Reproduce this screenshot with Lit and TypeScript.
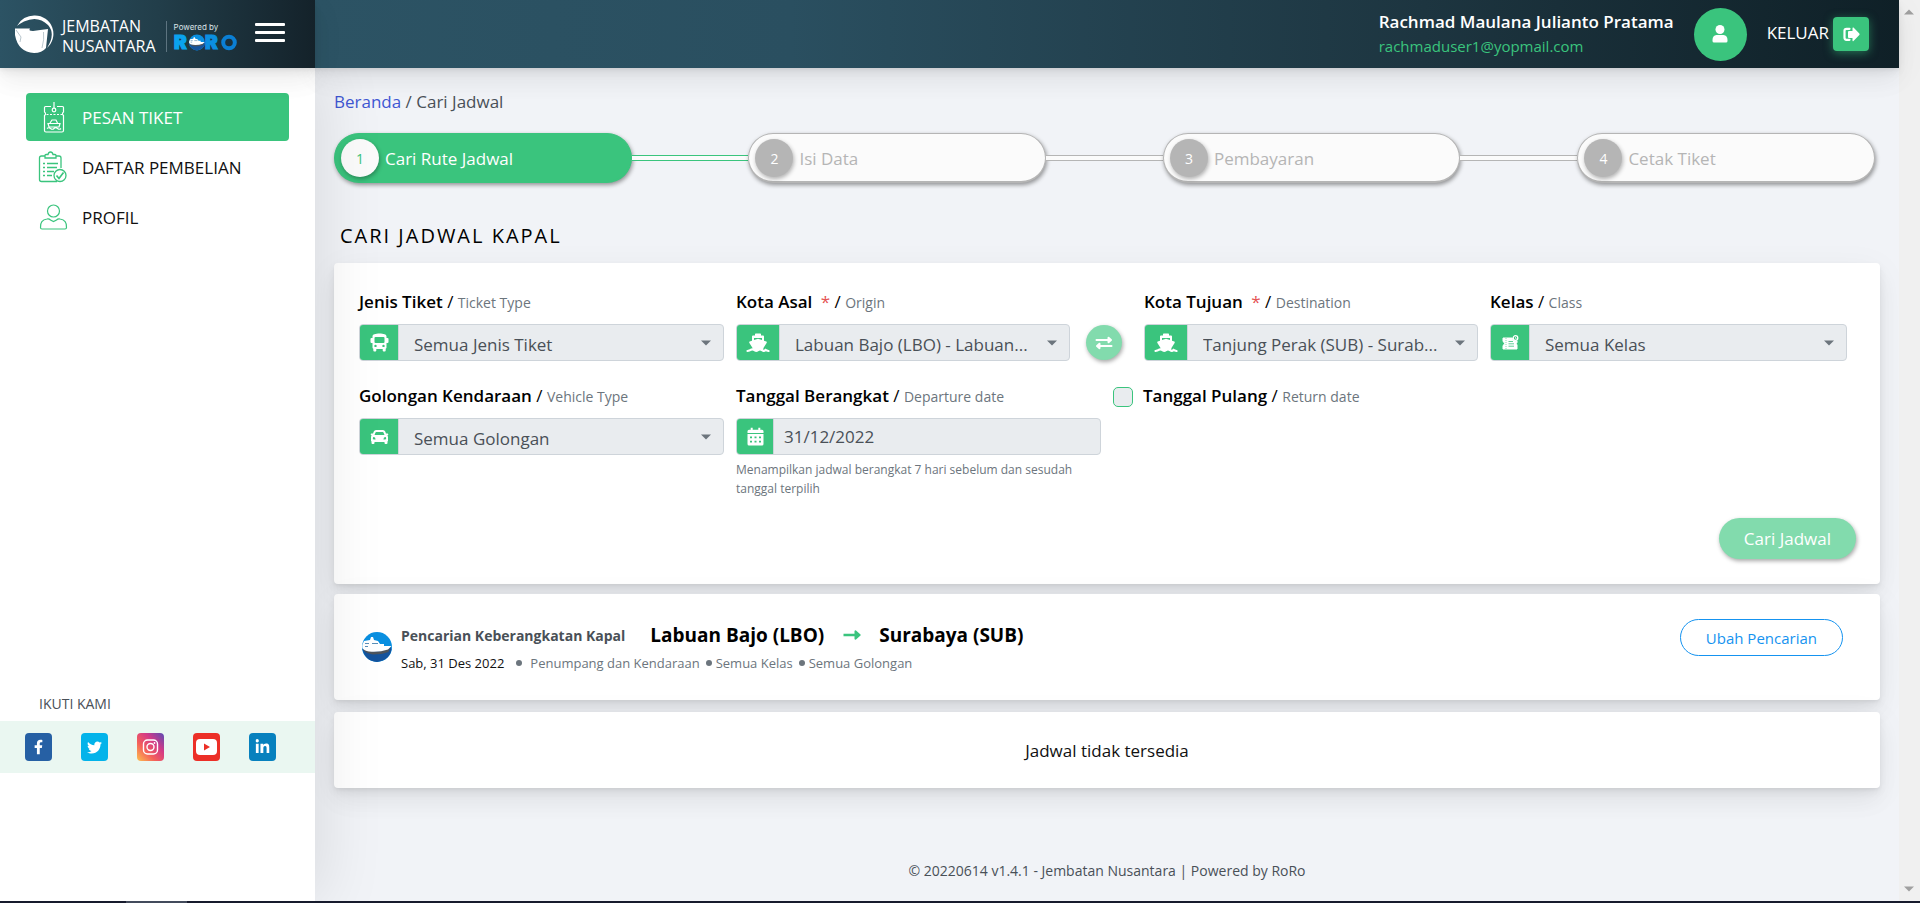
import { LitElement, html, svg, css, TemplateResult } from "lit";
import { customElement, property } from "lit/decorators.js";
import { classMap } from "lit/directives/class-map.js";

const icons: Record<string, TemplateResult> = {
  bus: html`<svg viewBox="0 0 19 19" width="19" height="19" fill="currentColor" aria-hidden="true">
    <path fill-rule="evenodd" d="M9.500 0.500C13.500 0.500 16.500 1.400 16.500 3.300V5H17.500Q18.500 5 18.500 6V9Q18.500 10 17.500 10H16.500V14.500Q16.500 15.500 15.700 15.700V17.500Q15.700 18.500 14.700 18.500H13.700Q12.700 18.500 12.700 17.500V16H6.300V17.500Q6.300 18.500 5.300 18.500H4.300Q3.300 18.500 3.300 17.500V15.700Q2.500 15.500 2.500 14.500V10H1.500Q0.500 10 0.500 9V6Q0.500 5 1.500 5H2.500V3.300C2.500 1.400 5.500 0.500 9.500 0.500ZM5.500 4Q4.500 4 4.500 5V9Q4.500 10 5.500 10H13.500Q14.500 10 14.500 9V5Q14.500 4 13.500 4ZM5.500 11.700A1.200 1.200 0 1 0 5.500 14.100A1.200 1.200 0 1 0 5.500 11.700ZM13.500 11.700A1.200 1.200 0 1 0 13.500 14.100A1.200 1.200 0 1 0 13.500 11.700Z"/></svg>`,
  car: html`<svg viewBox="0 0 19 16" width="19" height="16" fill="currentColor" aria-hidden="true">
    <path fill-rule="evenodd" d="M6 1H13Q14.600 1 15.200 2.500L16 4.600H17.700Q18.600 4.800 18.200 5.700L17.400 6.500Q18 7.200 18 8.200V11.500Q18 12.200 17.500 12.600V14Q17.500 15 16.500 15H15.500Q14.500 15 14.500 14V13H4.500V14Q4.500 15 3.500 15H2.500Q1.500 15 1.500 14V12.600Q1 12.200 1 11.500V8.200Q1 7.200 1.600 6.500L0.800 5.700Q0.400 4.800 1.300 4.600H3L3.800 2.500Q4.400 1 6 1ZM6.300 3Q5.700 3 5.500 3.500L4.500 6H14.500L13.500 3.500Q13.300 3 12.700 3ZM4 8A1.200 1.200 0 1 0 4 10.400H5.600Q5.400 8.200 4 8ZM15 8Q13.600 8.200 13.400 10.400H15A1.200 1.200 0 1 0 15 8Z"/></svg>`,
  ship: html`<svg viewBox="0 0 24 20" width="24" height="20" fill="currentColor" aria-hidden="true">
    <path fill-rule="evenodd" d="M9 1.200Q9 0.500 9.700 0.500H14.300Q15 0.500 15 1.200V2.500H17Q18 2.500 18 3.500V7.700L20.300 8.500Q21.200 9 20.600 9.900L17.600 14.700L17 17H7L6.400 14.700L3.400 9.900Q2.800 9 3.700 8.500L6 7.700V3.500Q6 2.500 7 2.500H9ZM8 5V7L12 5.700L16 7V5Z"/>
    <path d="M1.500 18Q3.500 17.800 4.700 16.900Q6.300 15.600 8 17Q10 18.600 12 17.100Q14 15.500 16 17.100Q18 18.600 19.500 16.900Q20.800 17.800 22.500 18" fill="none" stroke="currentColor" stroke-width="2.200" stroke-linecap="round"/></svg>`,
  calendar: html`<svg viewBox="0 0 17 19" width="17" height="19" fill="currentColor" aria-hidden="true">
    <path d="M3.700 0.700H5.700V2.700H11.300V0.700H13.300V2.700H15Q16.500 2.700 16.500 4.200V6H0.500V4.200Q0.500 2.700 2 2.700H3.700Z"/>
    <path fill-rule="evenodd" d="M0.500 7H16.500V17Q16.500 18.500 15 18.500H2Q0.500 18.500 0.500 17ZM3 9.500V11.300H5V9.500ZM7.500 9.500V11.300H9.500V9.500ZM12 9.500V11.300H14V9.500ZM3 13.700V15.500H5V13.700ZM7.500 13.700V15.500H9.500V13.700ZM12 13.700V15.500H14V13.700Z"/></svg>`,
  ticket: html`<svg viewBox="0 0 17 15" width="17" height="15" fill="currentColor" aria-hidden="true">
    <path d="M1 3H10.500Q10.500 6 14 6.200L15 6V7.500Q13.500 8.500 15 10V14H1V10.500Q2.500 9.500 2.500 8.500Q2.500 7.500 1 6.500Z" stroke="currentColor" stroke-linejoin="round"/>
    <path d="M4 3V14" stroke="#3ac47d" stroke-width="0.600" stroke-dasharray="1 1"/>
    <path d="M6.500 6.500H11M6.500 8.800H12M6.500 11.200H12" stroke="#3ac47d" stroke-width="0.800"/>
    <circle cx="13.500" cy="3" r="2.300" fill="none" stroke="currentColor" stroke-width="1.300"/><path d="M13.500 2V3.500H14.500" fill="none" stroke="currentColor" stroke-width="0.700"/></svg>`,
};

@customElement("select-field")
export class SelectField extends LitElement {
  @property() label = "";
  @property() note = "";
  @property() icon = "bus";
  @property() value = "";
  @property({ type: Boolean }) required = false;
  @property({ type: Boolean }) wide = false;

  static styles = css`
    :host { display: block; min-width: 0; }
    .caption { display: block; line-height: 24px; margin-bottom: 9px; color: #000; font-size: 17px; white-space: nowrap; }
    .name { font-weight: 600; }
    .star { color: #e55353; margin-left: 4px; }
    .note { font-size: 14px; color: #6c757d; }
    .group { display: flex; height: 37px; box-sizing: border-box; border: 1px solid #ced4da; border-radius: 4px; overflow: hidden; background: #e9ecef; }
    .addon { flex: none; width: 38px; display: grid; place-items: center; background: #3ac47d; color: #fff; border-right: 1px solid #ced4da; }
    .addon.wide { width: 42px; }
    .control { flex: 1; min-width: 0; display: grid; align-items: center; }
    select { grid-area: 1 / 1; appearance: none; width: 100%; height: 35px; border: 0; margin: 0; padding: 4px 30px 0 15px; background: none; font: inherit; font-size: 17px; color: #495057; opacity: 1; text-overflow: ellipsis; }
    .caret { grid-area: 1 / 1; justify-self: end; margin-right: 12px; pointer-events: none; }
  `;

  render() {
    return html`
      <label class="caption" for="control"><span class="name">${this.label}</span>${this.required ? html` <span class="star">*</span>` : ""} / <span class="note">${this.note}</span></label>
      <div class="group">
        <span class=${classMap({ addon: true, wide: this.wide })}>${icons[this.icon]}</span>
        <span class="control">
          <select id="control" disabled><option>${this.value}</option></select>
          <svg class="caret" width="10" height="6" viewBox="0 0 10 6" aria-hidden="true"><path d="M0 0.500H10L5 5.500Z" fill="#6c757d"/></svg>
        </span>
      </div>`;
  }
}

const globe = svg`
  <circle cx="15" cy="15" r="15" fill="#0a8fe0"/>
  <path d="M0.500 17L28.500 15L29.500 17Q28 28 15 30Q3 29 0.500 17Z" fill="#15539c"/>
  <path d="M0.500 17Q8 20.500 20 19L28.500 14.500L26.500 20Q20 22.500 11 22.500Q4 21.500 0.500 17Z" fill="#4d545c"/>
  <path d="M0.300 13L2 9L5 8.500L8 8L9 5H11L12 8L16 9L18 12H22V14L29.500 14L26 17.500Q17 20.500 7 19.500Q2 18.500 0.300 16Z" fill="#fff"/>
  <path d="M3 11.500H7M10 11.500H16M3 14.500H6" stroke="#5b8fb8" stroke-width="1.200"/>`;

@customElement("app-root")
export class AppRoot extends LitElement {
  static styles = css`
    :host { display: block; font-family: "Open Sans", "Noto Sans", sans-serif; font-size: 17px; color: #495057; --green: #3ac47d; --card-shadow: 0 7px 35px rgba(4, 20, 24, 0.05), 0 15px 22px rgba(4, 20, 24, 0.04), 0 4px 8px rgba(4, 20, 24, 0.06), 0 2px 3px rgba(4, 20, 24, 0.04); }
    * { box-sizing: border-box; }
    a { text-decoration: none; color: inherit; }
    button { font: inherit; cursor: pointer; border: 0; padding: 0; }
    svg { display: block; }
    .page { min-height: 100vh; display: grid; grid-template-columns: 315px minmax(0, 1fr) 21px; grid-template-rows: 68px 1fr 2px; background: #f1f3f7; }

    .brand { z-index: 3; display: flex; align-items: center; padding-left: 15px; background: linear-gradient(to right, #2c5364, #223e4a 50%, #14222a); color: #fff; box-shadow: var(--card-shadow); }
    .brand-name { margin-left: 8px; padding-top: 4px; font-size: 16px; line-height: 20px; }
    .divider { width: 1px; height: 31px; margin: 4px 7px 0 10px; background: #5d7480; }
    .powered { display: flex; flex-direction: column; gap: 2px; width: 63px; padding-top: 4px; }
    .powered small { font-family: Inter, sans-serif; font-size: 8px; line-height: 10px; color: #dbe3e7; white-space: nowrap; }
    .powered svg { overflow: visible; }
    .burger { width: 30px; height: 19px; margin-left: 18px; margin-bottom: 4px; background: none; display: flex; flex-direction: column; justify-content: space-between; }
    .burger span { height: 3px; border-radius: 1px; background: #fff; }

    .topbar { z-index: 2; display: flex; justify-content: flex-end; align-items: center; padding-right: 30px; color: #fff; background: linear-gradient(to right, #2c5364, #2a4f60 30%, #1d3540 70%, #0f2027); box-shadow: var(--card-shadow); }
    .user { line-height: 25px; }
    .user strong { display: block; font-weight: 600; font-size: 17px; }
    .user span { display: block; color: var(--green); font-size: 15px; }
    .avatar { width: 53px; height: 53px; border-radius: 50%; background: var(--green); display: grid; place-items: center; margin: 0 20px; }
    .logout { display: flex; align-items: center; gap: 4px; background: none; color: #fff; }
    .logout .text { margin-bottom: 4px; }
    .logout .badge { width: 36px; height: 34px; border-radius: 4px; background: var(--green); display: grid; place-items: center; box-shadow: 0 2px 10px rgba(58, 196, 125, 0.5); }

    .sidebar { z-index: 1; display: flex; flex-direction: column; background: #fff; box-shadow: 7px 0 60px rgba(0, 0, 0, 0.1); }
    nav { display: flex; flex-direction: column; gap: 2px; padding: 25px 26px 0; }
    nav a { height: 48px; display: flex; align-items: center; gap: 14px; padding-left: 12px; border-radius: 4px; color: #111; }
    nav a.active { background: var(--green); color: #fff; }
    nav svg { width: 30px; height: 32px; color: var(--green); }
    nav a.active svg { color: #fff; }
    .follow { margin: auto 0 128px; }
    .follow p { margin: 0; padding: 0 0 6px 39px; font-size: 14px; line-height: 22px; }
    .social { display: flex; align-items: center; gap: 29px; height: 52px; padding-left: 25px; background: #eaf7f1; }
    .social a > svg { width: 27px; height: 28px; }

    main { display: flex; flex-direction: column; padding: 22px 19px 0; }
    .crumbs { line-height: 24px; }
    .crumbs a { color: #3f57d3; }
    .steps { list-style: none; display: flex; align-items: center; margin: 19px 5px 0 0; padding: 0; color: #b5b5b5; }
    .step { flex: 298 298 298px; height: 50px; display: flex; align-items: center; gap: 6px; padding: 1px 0 0 6px; border: 1px solid #b5b5b5; border-bottom-width: 2px; border-radius: 25px; background: #fbfbfb; box-shadow: 1px 2px 4px rgba(0, 0, 0, 0.4); }
    .num { width: 38px; height: 38px; border-radius: 50%; display: grid; place-items: center; background: #b5b5b5; color: #fff; font-size: 14px; box-shadow: 1px 2px 4px rgba(0, 0, 0, 0.3); }
    .step.on { background: var(--green); border-color: var(--green); color: #fff; }
    .step.on .num { background: #fbfbfb; color: var(--green); }
    .link { flex: 117 117 117px; height: 6px; border: 1px solid #b5b5b5; border-width: 1px 0; background: #fbfbfb; }
    .link.on { border-color: var(--green); }
    h1 { margin: 41px 0 15px 6px; font-size: 20px; line-height: 24px; font-weight: 400; letter-spacing: 2px; color: #000; }

    .card { background: #fff; border-radius: 4px; box-shadow: var(--card-shadow); }
    .search { padding: 27px 24px 25px 25px; display: flex; flex-direction: column; }
    .row { display: grid; column-gap: 12px; margin-right: 9px; align-items: start; }
    .row.first { grid-template-columns: 365fr 334fr 50px 334fr 357fr; margin-bottom: 23px; }
    .row.second { grid-template-columns: 365fr 365fr 734fr; }
    .swap { align-self: end; justify-self: center; width: 36px; height: 35px; margin: 0 6px 1px 0; border-radius: 50%; background: #82dbad; color: #fff; display: grid; place-items: center; box-shadow: 1px 2px 4px rgba(0, 0, 0, 0.35); }
    .caption { display: block; line-height: 24px; color: #000; white-space: nowrap; }
    .caption b { font-weight: 600; }
    .caption span { font-size: 14px; color: #6c757d; }
    .date { display: flex; height: 37px; margin-top: 9px; border: 1px solid #ced4da; border-radius: 4px; overflow: hidden; background: #e9ecef; }
    .date .addon { width: 37px; background: var(--green); color: #fff; display: grid; place-items: center; border-right: 1px solid #ced4da; }
    .date input { flex: 1; min-width: 0; border: 0; padding: 0 10px; background: none; font: inherit; color: #495057; }
    .help { margin: 5px 24px 0 0; font-size: 12px; line-height: 19px; color: #6c757d; }
    .return { display: flex; align-items: center; gap: 10px; }
    .return input { appearance: none; width: 20px; height: 20px; margin: 0; border: 1px solid var(--green); border-radius: 5px; background: #e9ecef; }
    .submit { align-self: flex-end; height: 41px; padding: 0 25px; margin-top: 20px; border-radius: 21px; background: #82dbad; color: #fff; box-shadow: 1px 2px 4px rgba(0, 0, 0, 0.35); }

    .result { display: flex; align-items: flex-start; margin-top: 10px; min-height: 106px; padding: 25px 37px 0 28px; }
    .result .logo { width: 30px; height: 30px; margin: 13px 9px 0 0; }
    .info { flex: 1; }
    .route { display: flex; align-items: center; height: 32px; color: #000; font-size: 19px; font-weight: 700; }
    .route .what { font-size: 14px; color: #495057; margin-right: 25px; }
    .route svg { margin: 0 18px 0 19px; }
    .facts { display: flex; align-items: center; height: 24px; font-size: 13px; color: #6c757d; }
    .facts .day { color: #111; margin-right: 12px; }
    .dot { width: 6px; height: 6px; border-radius: 50%; background: #6c757d; margin-right: 4px; }
    .dot.lead { margin-right: 8px; }
    .facts .fact { margin-right: 6px; }
    .change { height: 37px; padding: 0 25px; background: none; border: 1px solid #1593f0; border-radius: 19px; color: #1593f0; font-size: 15px; }
    .empty { margin-top: 12px; height: 76px; display: grid; place-items: center; color: #111; }
    footer { margin-top: auto; padding-bottom: 18px; line-height: 24px; text-align: center; font-size: 14px; }

    .scroll { grid-column: 3; grid-row: 1 / 3; display: flex; flex-direction: column; justify-content: space-between; align-items: center; padding: 9px 1px 9px 0; background: #f0f0f0; }
    .taskbar { grid-column: 1 / -1; background: #171b2d; padding-left: 126px; z-index: 4; }
    .taskbar div { width: 61px; height: 2px; background: #434b5c; }
  `;

  private steps = ["Cari Rute Jadwal", "Isi Data", "Pembayaran", "Cetak Tiket"];

  render() {
    return html`
      <div class="page">
        <header class="brand">
          <svg width="39" height="38" viewBox="0 0 39 38" aria-hidden="true">
            <path d="M2 11A19 18.500 0 0 1 20 0.500A18.500 18.500 0 0 1 32 33Q41 19 33 10Q23 0 9 6.500Q5 8.500 2 11Z" fill="#fff"/>
            <path d="M0 13.500H15Q13 16 18 16Q25 15 33 14L31 33Q27 38 19 38Q3 37 0 20Z" fill="#fff"/>
            <path d="M28.500 17Q29.500 24 27 33" stroke="#9fb0b9" stroke-width="0.700" fill="none"/>
            <path d="M1 15L6 22L5 27" stroke="#b9c6cd" stroke-width="1" fill="none"/>
          </svg>
          <div class="brand-name">JEMBATAN<br />NUSANTARA</div>
          <div class="divider"></div>
          <div class="powered">
            <small>Powered by</small>
            <svg width="63" height="17" viewBox="0 0 63 17" role="img" aria-label="RORO">
              <text x="0" y="15" font-family="Inter, sans-serif" font-weight="900" font-size="19" fill="#0aa3ee" stroke="#0aa3ee" stroke-width="1.200">R</text>
              <g transform="translate(15 0.500) scale(0.530)">${globe}</g>
              <text x="31" y="15" font-family="Inter, sans-serif" font-weight="900" font-size="19" fill="#0b8fe0" stroke="#0b8fe0" stroke-width="1.200">R</text>
              <circle cx="55" cy="8.500" r="5.800" fill="none" stroke="#0b7fd4" stroke-width="4"/>
            </svg>
          </div>
          <button class="burger" aria-label="Menu"><span></span><span></span><span></span></button>
        </header>

        <header class="topbar">
          <div class="user"><strong>Rachmad Maulana Julianto Pratama</strong><span>rachmaduser1@yopmail.com</span></div>
          <div class="avatar">
            <svg width="16" height="18" viewBox="0 0 16 18" fill="#fff" aria-hidden="true"><circle cx="8" cy="4.500" r="4.500"/><path d="M4.500 10H11.500Q15.500 10.500 15.500 15V16Q15.500 17.500 14 17.500H2Q0.500 17.500 0.500 16V15Q0.500 10.500 4.500 10Z"/></svg>
          </div>
          <button class="logout">
            <span class="text">KELUAR</span>
            <span class="badge"><svg width="17" height="15" viewBox="0 0 17 15" fill="#fff" aria-hidden="true"><path d="M9.500 1.200Q9.500 0 10.500 0.600L16.300 6.500Q17 7.300 16.300 8.100L10.500 14Q9.500 14.600 9.500 13.500V11H6Q5 11 5 10V5Q5 4 6 4H9.500Z"/><path d="M6.500 1.800H3.500Q1.500 1.800 1.500 3.800V10.800Q1.500 12.800 3.500 12.800H6.500" fill="none" stroke="#fff" stroke-width="2.200" stroke-linecap="round"/></svg></span>
          </button>
        </header>

        <aside class="sidebar">
          <nav>
            <a class="active" href="#pesan">
              <svg viewBox="0 0 30 32" fill="none" stroke="currentColor" stroke-width="1.200" aria-hidden="true">
                <path d="M13 5.500H7.500Q6.500 5.500 6.500 6.500V11Q8.500 12.500 6.500 14.500V29.500Q6.500 31 8 31H24Q25.500 31 25.500 29.500V14.500Q23.500 12.500 25.500 11V6.500Q25.500 5.500 24.500 5.500H19"/>
                <path d="M16 1V7"/><circle cx="16" cy="9" r="1.800"/><path d="M8.500 13.500H24" stroke-dasharray="2 1.500"/>
                <path d="M12 22L14 19H18L19.500 22M10 22.500H22L21 26H11ZM9 27.500Q10.500 26 12.500 27.500T16 27.500T19.500 27.500T23 27.500"/>
              </svg>PESAN TIKET</a>
            <a href="#daftar">
              <svg viewBox="0 0 30 32" fill="none" stroke="currentColor" stroke-width="1.300" aria-hidden="true">
                <path d="M7 5H3.500Q1.500 5 1.500 7V28.500Q1.500 30.500 3.500 30.500H19M18 5H21Q23 5 23 7V17"/>
                <path d="M7 7V4.500Q7 3.500 8 3.500H10Q10.500 1 12.500 1T15 3.500H17Q18 3.500 18 4.500V7Z"/>
                <path d="M5 12.500H7M9 12.500H20M5 16.500H7M9 16.500H19M5 20.500H7M9 20.500H16M5 24.500H7M9 24.500H14"/>
                <circle cx="22" cy="24.500" r="6"/><path d="M18.500 24.500L21 27.500L25.500 21.500" stroke-width="1.700"/>
              </svg>DAFTAR PEMBELIAN</a>
            <a href="#profil">
              <svg viewBox="0 0 30 32" fill="none" stroke="currentColor" stroke-width="1.200" aria-hidden="true">
                <circle cx="15.500" cy="10" r="6"/>
                <path d="M9 18Q2 19 2.500 26.500Q2.500 28 4 28H27Q28.500 28 28.500 26.500Q29 19 22 18Q20 17.500 18.500 19L15.500 20.500L12.500 19Q11 17.500 9 18Z"/>
              </svg>PROFIL</a>
          </nav>
          <div class="follow">
            <p>IKUTI KAMI</p>
            <div class="social">
              <a href="#facebook" aria-label="Facebook"><svg viewBox="0 0 27 28"><rect width="27" height="28" rx="4" fill="#2660a4"/><svg x="9" y="6" width="9" height="16" viewBox="0 0 320 512"><path fill="#fff" d="M279.140 288l14.220-92.660h-88.910v-60.130c0-25.350 12.420-50.060 52.240-50.060h40.420V6.260S260.430 0 225.360 0c-73.220 0-121.080 44.380-121.080 124.720v70.620H22.890V288h81.390v224h100.170V288z"/></svg></svg></a>
              <a href="#twitter" aria-label="Twitter"><svg viewBox="0 0 27 28"><rect width="27" height="28" rx="4" fill="#03b3ea"/><svg x="6" y="7" width="15" height="15" viewBox="0 0 512 512"><path fill="#fff" d="M459.370 151.716c.325 4.548.325 9.097.325 13.645 0 138.720-105.583 298.558-298.558 298.558-59.452 0-114.680-17.219-161.137-47.106 8.447.974 16.568 1.299 25.340 1.299 49.055 0 94.213-16.568 130.274-44.832-46.132-.975-84.792-31.188-98.112-72.772 6.498.974 12.995 1.624 19.818 1.624 9.421 0 18.843-1.300 27.614-3.573-48.081-9.747-84.143-51.980-84.143-102.985v-1.299c13.969 7.797 30.214 12.670 47.431 13.319-28.264-18.843-46.781-51.005-46.781-87.391 0-19.492 5.197-37.360 14.294-52.954 51.655 63.675 129.300 105.258 216.365 109.807-1.624-7.797-2.599-15.918-2.599-24.040 0-57.828 46.782-104.934 104.934-104.934 30.213 0 57.502 12.670 76.670 33.137 23.715-4.548 46.456-13.320 66.599-25.340-7.798 24.366-24.366 44.833-46.132 57.827 21.117-2.273 41.584-8.122 60.426-16.243-14.292 20.791-32.161 39.308-52.628 54.253z"/></svg></svg></a>
              <a href="#instagram" aria-label="Instagram"><svg viewBox="0 0 27 28">
                <defs><linearGradient id="ig" x1="0" y1="1" x2="1" y2="0"><stop offset="0" stop-color="#fdc04f"/><stop offset="0.350" stop-color="#f4605a"/><stop offset="0.650" stop-color="#d43a86"/><stop offset="1" stop-color="#5a4bb5"/></linearGradient></defs>
                <rect width="27" height="28" rx="4" fill="url(#ig)"/><rect x="6.500" y="7" width="14" height="14" rx="4" fill="none" stroke="#fff" stroke-width="1.400"/><circle cx="13.500" cy="14" r="3.500" fill="none" stroke="#fff" stroke-width="1.400"/><circle cx="17.500" cy="10" r="0.900" fill="#fff"/></svg></a>
              <a href="#youtube" aria-label="YouTube"><svg viewBox="0 0 27 28"><rect width="27" height="28" rx="4" fill="#ec2f27"/><rect x="3" y="6" width="21" height="16" rx="4" fill="#fff"/><path d="M11 10.500L17 14L11 17.500Z" fill="#ec2f27"/></svg></a>
              <a href="#linkedin" aria-label="LinkedIn"><svg viewBox="0 0 27 28"><rect width="27" height="28" rx="4" fill="#0781be"/><svg x="6.500" y="6" width="14" height="16" viewBox="0 0 448 512"><path fill="#fff" d="M100.280 448H7.400V148.900h92.880zM53.790 108.100C24.090 108.100 0 83.500 0 53.800a53.790 53.790 0 0 1 107.580 0c0 29.700-24.100 54.300-53.790 54.300zM447.900 448h-92.680V302.400c0-34.700-.7-79.200-48.290-79.200-48.290 0-55.690 37.700-55.690 76.700V448h-92.780V148.900h89.080v40.800h1.300c12.400-23.500 42.690-48.300 87.880-48.300 94 0 111.280 61.900 111.280 142.300V448z"/></svg></svg></a>
            </div>
          </div>
        </aside>

        <main>
          <div class="crumbs"><a href="#beranda">Beranda</a> / Cari Jadwal</div>
          <ol class="steps">
            ${this.steps.map((name, i) => html`
              ${i ? html`<li class=${classMap({ link: true, on: i === 1 })} aria-hidden="true"></li>` : ""}
              <li class=${classMap({ step: true, on: i === 0 })}><span class="num">${i + 1}</span>${name}</li>`)}
          </ol>
          <h1>CARI JADWAL KAPAL</h1>

          <form class="card search" @submit=${(e: Event) => e.preventDefault()}>
            <div class="row first">
              <select-field label="Jenis Tiket" note="Ticket Type" icon="bus" value="Semua Jenis Tiket"></select-field>
              <select-field label="Kota Asal" note="Origin" icon="ship" value="Labuan Bajo (LBO) - Labuan..." required wide></select-field>
              <button type="button" class="swap" aria-label="Tukar">
                <svg width="18" height="14" viewBox="0 0 18 14" fill="none" stroke="#fff" stroke-width="2" stroke-linecap="round" stroke-linejoin="round" aria-hidden="true"><path d="M1.500 4H15M13.500 1.800L16 4L13.500 6.200ZM16.500 10H3M4.500 7.800L2 10L4.500 12.200Z"/></svg>
              </button>
              <select-field label="Kota Tujuan" note="Destination" icon="ship" value="Tanjung Perak (SUB) - Surab..." required wide></select-field>
              <select-field label="Kelas" note="Class" icon="ticket" value="Semua Kelas"></select-field>
            </div>
            <div class="row second">
              <select-field label="Golongan Kendaraan" note="Vehicle Type" icon="car" value="Semua Golongan"></select-field>
              <div>
                <label class="caption" for="depart"><b>Tanggal Berangkat</b> / <span>Departure date</span></label>
                <div class="date"><span class="addon">${icons.calendar}</span><input id="depart" type="text" value="31/12/2022" readonly /></div>
                <p class="help">Menampilkan jadwal berangkat 7 hari sebelum dan sesudah tanggal terpilih</p>
              </div>
              <div class="return"><input id="return" type="checkbox" disabled /><label class="caption" for="return"><b>Tanggal Pulang</b> / <span>Return date</span></label></div>
            </div>
            <button class="submit">Cari Jadwal</button>
          </form>

          <section class="card result">
            <svg class="logo" viewBox="0 0 30 30" aria-hidden="true">${globe}</svg>
            <div class="info">
              <div class="route"><span class="what">Pencarian Keberangkatan Kapal</span>Labuan Bajo (LBO)
                <svg width="18" height="10" viewBox="0 0 18 10" aria-hidden="true"><path d="M0.500 3.700H11.500V1Q12 0 13 0.500L17.500 4.500Q18 5 17.500 5.500L13 9.500Q12 10 11.500 9V6.300H0.500Z" fill="#3ac47d"/></svg>
                Surabaya (SUB)</div>
              <div class="facts">
                <span class="day">Sab, 31 Des 2022</span>
                <span class="dot lead"></span><span class="fact">Penumpang dan Kendaraan</span>
                <span class="dot"></span><span class="fact">Semua Kelas</span>
                <span class="dot"></span><span class="fact">Semua Golongan</span>
              </div>
            </div>
            <button class="change">Ubah Pencarian</button>
          </section>

          <section class="card empty">Jadwal tidak tersedia</section>
          <footer>© 20220614 v1.4.1 - Jembatan Nusantara | Powered by RoRo</footer>
        </main>

        <div class="scroll" aria-hidden="true">
          <svg width="10" height="6" viewBox="0 0 10 6"><path d="M0 5.500H10L5 0.500Z" fill="#a0a0a0"/></svg>
          <svg width="10" height="6" viewBox="0 0 10 6"><path d="M0 0.500H10L5 5.500Z" fill="#a0a0a0"/></svg>
        </div>
        <div class="taskbar" aria-hidden="true"><div></div></div>
      </div>`;
  }
}
